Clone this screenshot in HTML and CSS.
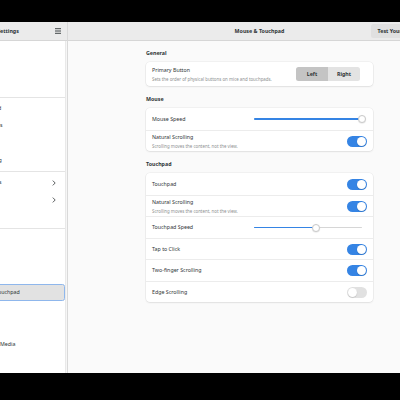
FILE: index.html
```html
<!DOCTYPE html>
<html lang="en">
<head>
<meta charset="utf-8">
<title>Mouse &amp; Touchpad</title>
<link rel="stylesheet" href="styles.css">
</head>
<body>
<div class="screen">
  <div class="bar-top"></div>
  <div class="window">
    <aside class="side">
      <header class="side-head">
        <span class="head-cell">
          <svg class="search-icon" viewBox="0 0 8 8" width="6" height="6"><circle cx="3.2" cy="3.2" r="2.4" fill="none" stroke="#2e3436" stroke-width="1"/><path d="M5 5 L7.4 7.4" stroke="#2e3436" stroke-width="1.1"/></svg>
        </span>
        <span class="side-title">Settings</span>
        <span class="head-cell end">
          <svg class="menu-icon" viewBox="0 0 6 6" width="6" height="6"><path d="M0 0.7H6M0 3H6M0 5.3H6" stroke="#2e3436" stroke-width="0.9"/></svg>
        </span>
      </header>
      <nav class="side-list">
        <div class="group">
          <div class="s-row"><span class="s-icon"></span><span class="s-label">Wi-Fi</span></div>
          <div class="s-row"><span class="s-icon"></span><span class="s-label">Network</span></div>
          <div class="s-row"><span class="s-icon"></span><span class="s-label">Bluetooth</span></div>
        </div>
        <div class="group">
          <div class="s-row"><span class="s-icon"></span><span class="s-label">Background</span></div>
          <div class="s-row"><span class="s-icon"></span><span class="s-label">Notifications</span></div>
          <div class="s-row"><span class="s-icon"></span><span class="s-label">Search</span></div>
          <div class="s-row"><span class="s-icon"></span><span class="s-label">Multitasking</span></div>
        </div>
        <div class="group">
          <div class="s-row"><span class="s-icon"></span><span class="s-label">Applications</span><svg class="chev" viewBox="0 0 4 6" width="4" height="6"><path d="M0.8 0.6 L3.2 3 L0.8 5.4" fill="none" stroke="#2e3436" stroke-width="0.8"/></svg></div>
          <div class="s-row"><span class="s-icon"></span><span class="s-label">Privacy</span><svg class="chev" viewBox="0 0 4 6" width="4" height="6"><path d="M0.8 0.6 L3.2 3 L0.8 5.4" fill="none" stroke="#2e3436" stroke-width="0.8"/></svg></div>
          <div class="s-row"><span class="s-icon"></span><span class="s-label">Sharing</span></div>
        </div>
        <div class="group last">
          <div class="s-row"><span class="s-icon"></span><span class="s-label">Sound</span></div>
          <div class="s-row"><span class="s-icon"></span><span class="s-label">Power</span></div>
          <div class="s-row"><span class="s-icon"></span><span class="s-label">Displays</span></div>
          <div class="s-row selected"><span class="s-icon"></span><span class="s-label">Mouse &amp; Touchpad</span></div>
          <div class="s-row"><span class="s-icon"></span><span class="s-label">Keyboard</span></div>
          <div class="s-row"><span class="s-icon"></span><span class="s-label">Printers</span></div>
          <div class="s-row"><span class="s-icon"></span><span class="s-label">Removable Media</span></div>
          <div class="s-row"><span class="s-icon"></span><span class="s-label">Color</span></div>
        </div>
      </nav>
    </aside>
    <main class="main">
      <header class="main-head">
        <span class="head-cell"></span>
        <span class="main-title">Mouse &amp; Touchpad</span>
        <span class="head-cell end"><button class="test-btn">Test Your Settings</button></span>
      </header>
      <div class="main-body">
        <div class="clamp">
          <h2 class="heading">General</h2>
          <div class="card">
            <div class="row tall">
              <div class="text">
                <div class="title">Primary Button</div>
                <div class="subtitle">Sets the order of physical buttons on mice and touchpads.</div>
              </div>
              <div class="linked">
                <span class="seg active">Left</span>
                <span class="seg">Right</span>
              </div>
            </div>
          </div>

          <h2 class="heading">Mouse</h2>
          <div class="card">
            <div class="row">
              <div class="text"><div class="title">Mouse Speed</div></div>
              <div class="slider"><div class="track" style="--v:100%"><div class="fill"></div><div class="knob"></div></div></div>
            </div>
            <div class="row">
              <div class="text">
                <div class="title">Natural Scrolling</div>
                <div class="subtitle">Scrolling moves the content, not the view.</div>
              </div>
              <span class="switch on"><span class="dot"></span></span>
            </div>
          </div>

          <h2 class="heading">Touchpad</h2>
          <div class="card">
            <div class="row">
              <div class="text"><div class="title">Touchpad</div></div>
              <span class="switch on"><span class="dot"></span></span>
            </div>
            <div class="row">
              <div class="text">
                <div class="title">Natural Scrolling</div>
                <div class="subtitle">Scrolling moves the content, not the view.</div>
              </div>
              <span class="switch on"><span class="dot"></span></span>
            </div>
            <div class="row">
              <div class="text"><div class="title">Touchpad Speed</div></div>
              <div class="slider"><div class="track" style="--v:57.4%"><div class="fill"></div><div class="knob"></div></div></div>
            </div>
            <div class="row">
              <div class="text"><div class="title">Tap to Click</div></div>
              <span class="switch on"><span class="dot"></span></span>
            </div>
            <div class="row">
              <div class="text"><div class="title">Two-finger Scrolling</div></div>
              <span class="switch on"><span class="dot"></span></span>
            </div>
            <div class="row">
              <div class="text"><div class="title">Edge Scrolling</div></div>
              <span class="switch"><span class="dot"></span></span>
            </div>
          </div>
        </div>
      </div>
    </main>
  </div>
  <div class="bar-bottom"></div>
</div>
</body>
</html>
```

FILE: styles.css
```css
* { box-sizing: border-box; }

html, body {
  margin: 0;
  padding: 0;
  background: #000;
}

body {
  width: 400px;
  height: 400px;
  overflow: hidden;
  font-family: "Noto Sans", "DejaVu Sans", sans-serif;
  color: #2e3436;
}

.screen {
  width: 400px;
  height: 400px;
  display: flex;
  flex-direction: column;
  overflow: hidden;
}

.bar-top { height: 22px; background: #000; flex: none; }
.bar-bottom { flex: 1; background: #000; }

.window {
  height: 351px;
  flex: none;
  display: flex;
  margin-left: -51px;
  width: 502px;
}

/* ---------- sidebar ---------- */
.side {
  width: 119px;
  flex: none;
  display: flex;
  flex-direction: column;
  background: #f6f6f6;
  border-right: 1px solid #d9d9d9;
}

.side-head, .main-head {
  height: 19px;
  flex: none;
  background: #ebebeb;
  border-bottom: 1px solid #d6d6d6;
  display: grid;
  grid-template-columns: 1fr auto 1fr;
  align-items: center;
}

.head-cell { display: flex; align-items: center; padding-left: 8px; }
.head-cell.end { justify-content: flex-end; padding-left: 0; }
.side-head .head-cell.end { padding-right: 6px; }
.search-icon, .menu-icon { display: block; }

.side-title, .main-title {
  font-size: 5.3px;
  font-weight: 700;
  line-height: 8px;
}

.side-list {
  flex: 1;
  background: #fff;
  margin-right: 1px;
  border-right: 1px solid #e9e9e9;
}

.group {
  padding: 2px 0;
  border-bottom: 1px solid #e4e4e4;
}
.group.last { border-bottom: none; padding-top: 3px; }

.s-row {
  height: 17.3px;
  display: flex;
  align-items: center;
  padding: 0 9px 0 8px;
  font-size: 5.3px;
  line-height: 7px;
}

.s-icon {
  width: 7px;
  height: 7px;
  flex: none;
  margin-right: 7px;
  border-radius: 1px;
  background: #6b6f70;
}

.s-label { flex: 1; white-space: nowrap; }
.chev { display: block; flex: none; }

.s-row.selected {
  background: #e2e2e2;
  border-radius: 2.5px;
  border: 1px solid #8fb7ec;
}

/* ---------- main ---------- */
.main {
  flex: 1;
  display: flex;
  flex-direction: column;
  background: #fafafa;
}

.test-btn {
  font-family: inherit;
  font-size: 5.3px;
  font-weight: 700;
  color: #2e3436;
  height: 14px;
  padding: 0 7px;
  margin-right: 19px;
  border: none;
  border-radius: 2.5px;
  background: #e0e0e0;
  white-space: nowrap;
}

.main-body {
  flex: 1;
  padding-top: 7px;
}

.clamp {
  width: 227px;
  margin: 0 auto;
}

.heading {
  margin: 8px 0 4px;
  font-size: 5.3px;
  font-weight: 700;
  line-height: 10px;
}
.heading:first-child { margin-top: 0; }

.card {
  background: #fff;
  border-radius: 4px;
  box-shadow: 0 0 0 0.6px rgba(0, 0, 0, 0.07), 0 1px 2px rgba(0, 0, 0, 0.07);
}

.row {
  height: 21.5px;
  display: flex;
  align-items: center;
  padding: 0 6px;
}
.row + .row { border-top: 1px solid #ececec; }
.row.tall { height: 24.3px; }

.text { flex: 1; }

.title {
  font-size: 5.3px;
  line-height: 7px;
  white-space: nowrap;
}

.subtitle {
  font-size: 4.4px;
  line-height: 6px;
  margin-top: 2px;
  color: #8d9091;
  white-space: nowrap;
}

.linked {
  display: flex;
  margin-right: 7px;
}

.seg {
  width: 32px;
  height: 14px;
  display: flex;
  align-items: center;
  justify-content: center;
  font-size: 5.3px;
  font-weight: 700;
  background: #e3e3e3;
}
.seg:first-child { border-radius: 2.5px 0 0 2.5px; }
.seg:last-child { border-radius: 0 2.5px 2.5px 0; }
.seg.active { background: #c4c4c4; }

.slider {
  width: 113px;
  height: 9px;
  display: flex;
  align-items: center;
}

.track {
  position: relative;
  width: 108px;
  height: 1.8px;
  border-radius: 1px;
  background: #d6d6d6;
}

.fill {
  width: var(--v);
  height: 100%;
  border-radius: 1px;
  background: #3584e4;
}

.knob {
  position: absolute;
  left: var(--v);
  top: 50%;
  width: 8px;
  height: 8px;
  margin: -4px 0 0 -4px;
  border-radius: 50%;
  background: #fff;
  border: 0.6px solid #c9c9c9;
  box-shadow: 0 0.5px 1px rgba(0, 0, 0, 0.12);
}

.switch {
  width: 20px;
  height: 11px;
  flex: none;
  border-radius: 6px;
  background: #e1e1e1;
  padding: 1px;
  display: flex;
  justify-content: flex-start;
}
.switch.on {
  background: #3584e4;
  justify-content: flex-end;
}

.dot {
  width: 9px;
  height: 9px;
  border-radius: 50%;
  background: #fff;
  box-shadow: 0 0.5px 1px rgba(0, 0, 0, 0.2);
}
```
